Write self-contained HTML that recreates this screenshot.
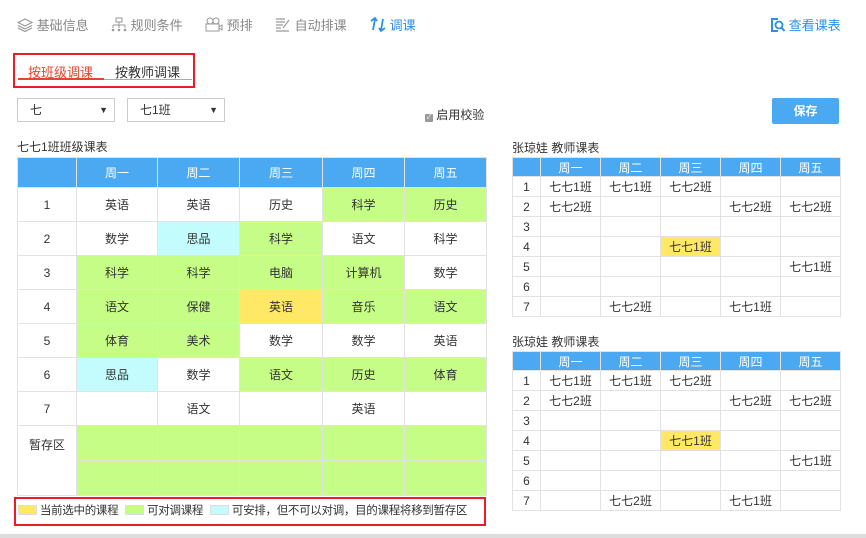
<!DOCTYPE html>
<html><head><style>
body{margin:0;width:866px;height:538px;background:#fff;font-family:"Liberation Sans","Noto Sans CJK SC",sans-serif;font-size:12px;color:#333;position:relative;overflow:hidden}
.a{position:absolute}
.nav{top:15px;font-size:13px;color:#888;}
table{border-collapse:collapse;position:absolute;table-layout:fixed;font-size:12px}
td{border:1px solid #e2e2e2;text-align:center;padding:0}
.ct th,.tt th{background:#4aa9f1;color:#fff;font-weight:normal;border:1px solid #e2e2e2;padding:0;font-size:12px}
.ct td{height:33px}
.ct th{height:29px}
.tt th{height:18px}
.tt td{height:19px}
.g{background:#c6fd86}.c{background:#c2fcfd}.y{background:#ffe866}
.sel{border:1px solid #ccc;height:24px;top:98px;font-size:12px;line-height:22px;box-sizing:border-box}
</style></head><body>
<div class="a nav" style="left:17px"><svg width="16" height="14" viewBox="0 0 16 14" style="vertical-align:-2px"><path d="M8 1L15 4.5 8 8 1 4.5Z M1 7.5L8 11 15 7.5 M1 10L8 13.5 15 10" fill="none" stroke="#999" stroke-width="1.2"/></svg> 基础信息</div>
<div class="a nav" style="left:111px"><svg width="16" height="15" viewBox="0 0 16 15" style="vertical-align:-2px"><rect x="5" y="1" width="6" height="4" fill="none" stroke="#999"/><path d="M8 5V8M2 8H14M2 8V11M8 8V11M14 8V11" stroke="#999" fill="none"/><circle cx="2" cy="13" r="1.3" fill="#999"/><circle cx="8" cy="13" r="1.3" fill="#999"/><circle cx="14" cy="13" r="1.3" fill="#999"/></svg> 规则条件</div>
<div class="a nav" style="left:205px"><svg width="18" height="15" viewBox="0 0 18 15" style="vertical-align:-2px"><circle cx="5" cy="4" r="3" fill="none" stroke="#999"/><circle cx="11" cy="4" r="3" fill="none" stroke="#999"/><rect x="1" y="7" width="13" height="7" fill="none" stroke="#999"/><path d="M14 10L17 8V13L14 11" fill="none" stroke="#999"/></svg> 预排</div>
<div class="a nav" style="left:275px"><svg width="16" height="15" viewBox="0 0 16 15" style="vertical-align:-2px"><path d="M1 2H10M1 5H10M1 8H8M1 11H6M1 14H14M8 11L14 3" stroke="#999" fill="none" stroke-width="1.2"/></svg> 自动排课</div>
<div class="a nav" style="left:370px;color:#2e8fe8"><svg width="16" height="15" viewBox="0 0 16 15" style="vertical-align:-2px"><path d="M3 13L5 2M1 4L5 1 7 4M13 2L11 13M15 11L11 14 9 11" fill="none" stroke="#2e8fe8" stroke-width="1.8"/></svg> 调课</div>
<div class="a nav" style="left:770px;color:#2e8fe8"><svg width="15" height="16" viewBox="0 0 15 16" style="vertical-align:-3px"><path d="M1 1H8V3H3V13H8V15H1Z" fill="#2e8fe8"/><circle cx="9" cy="8" r="3.5" fill="none" stroke="#2e8fe8" stroke-width="1.8"/><path d="M11.5 10.5L14.5 14" stroke="#2e8fe8" stroke-width="2"/></svg> 查看课表</div>

<div class="a" style="left:13px;top:53px;width:178px;height:31px;border:2px solid #ee1c25"></div>
<div class="a" style="left:28px;top:62px;font-size:13px;color:#e8452a">按班级调课</div>
<div class="a" style="left:18px;top:78px;width:86px;height:2px;background:#e8452a"></div>
<div class="a" style="left:104px;top:79px;width:88px;height:1px;background:#aaa"></div>
<div class="a" style="left:115px;top:62px;font-size:13px;color:#333">按教师调课</div>

<div class="a sel" style="left:17px;width:98px;padding-left:12px">七<span style="position:absolute;right:6px;font-size:9px">▼</span></div>
<div class="a sel" style="left:127px;width:98px;padding-left:12px">七1班<span style="position:absolute;right:6px;font-size:9px">▼</span></div>
<div class="a" style="left:425px;top:106px"><span style="display:inline-block;width:8px;height:8px;background:#999;border-radius:1px;vertical-align:0px;color:#fff;font-size:7px;line-height:8px;text-align:center">✓</span> 启用校验</div>
<div class="a" style="left:772px;top:98px;width:67px;height:26px;background:#4aa9f1;color:#fff;border-radius:2px;text-align:center;line-height:26px;font-weight:bold">保存</div>

<div class="a" style="left:17px;top:138px">七七1班班级课表</div>
<table class="ct" style="left:17px;top:157px;width:470px">
<col style="width:59px"><col style="width:81px"><col style="width:82px"><col style="width:83px"><col style="width:82px"><col style="width:82px">
<tr><th></th><th>周一</th><th>周二</th><th>周三</th><th>周四</th><th>周五</th></tr>
<tr><td>1</td><td>英语</td><td>英语</td><td>历史</td><td class="g">科学</td><td class="g">历史</td></tr>
<tr><td>2</td><td>数学</td><td class="c">思品</td><td class="g">科学</td><td>语文</td><td>科学</td></tr>
<tr><td>3</td><td class="g">科学</td><td class="g">科学</td><td class="g">电脑</td><td class="g">计算机</td><td>数学</td></tr>
<tr><td>4</td><td class="g">语文</td><td class="g">保健</td><td class="y">英语</td><td class="g">音乐</td><td class="g">语文</td></tr>
<tr><td>5</td><td class="g">体育</td><td class="g">美术</td><td>数学</td><td>数学</td><td>英语</td></tr>
<tr><td>6</td><td class="c">思品</td><td>数学</td><td class="g">语文</td><td class="g">历史</td><td class="g">体育</td></tr>
<tr><td>7</td><td></td><td>语文</td><td></td><td>英语</td><td></td></tr>
<tr><td rowspan="2" style="vertical-align:top;padding-top:10px;height:59px">暂存区</td><td class="g" style="height:34px"></td><td class="g"></td><td class="g"></td><td class="g"></td><td class="g"></td></tr>
<tr><td class="g" style="height:34px"></td><td class="g"></td><td class="g"></td><td class="g"></td><td class="g"></td></tr>
</table>

<div class="a" style="left:14px;top:497px;width:468px;height:25px;border:2px solid #ee1c25;font-size:11.5px;line-height:25px;white-space:nowrap;overflow:hidden;letter-spacing:-0.3px">
<span style="display:inline-block;width:17px;height:8px;background:#ffe866;border:1px solid #ddd;margin-left:2px;vertical-align:-1px"></span> 当前选中的课程
<span style="display:inline-block;width:17px;height:8px;background:#c6fd86;border:1px solid #ddd;margin-left:4px;vertical-align:-1px"></span> 可对调课程
<span style="display:inline-block;width:17px;height:8px;background:#c2fcfd;border:1px solid #ddd;margin-left:4px;vertical-align:-1px"></span> 可安排，但不可以对调，目的课程将移到暂存区</div>
<div class="a" style="left:0;top:534px;width:866px;height:4px;background:#ddd"></div>

<div class="a" style="left:512px;top:139px">张琼娃 教师课表</div>
<table class="tt" style="left:512px;top:157px;width:328px">
<col style="width:28px"><col style="width:60px"><col style="width:60px"><col style="width:60px"><col style="width:60px"><col style="width:60px">
<tr><th></th><th>周一</th><th>周二</th><th>周三</th><th>周四</th><th>周五</th></tr>
<tr><td>1</td><td>七七1班</td><td>七七1班</td><td>七七2班</td><td></td><td></td></tr>
<tr><td>2</td><td>七七2班</td><td></td><td></td><td>七七2班</td><td>七七2班</td></tr>
<tr><td>3</td><td></td><td></td><td></td><td></td><td></td></tr>
<tr><td>4</td><td></td><td></td><td class="y">七七1班</td><td></td><td></td></tr>
<tr><td>5</td><td></td><td></td><td></td><td></td><td>七七1班</td></tr>
<tr><td>6</td><td></td><td></td><td></td><td></td><td></td></tr>
<tr><td>7</td><td></td><td>七七2班</td><td></td><td>七七1班</td><td></td></tr>
</table>
<div class="a" style="left:512px;top:333px">张琼娃 教师课表</div>
<table class="tt" style="left:512px;top:351px;width:328px">
<col style="width:28px"><col style="width:60px"><col style="width:60px"><col style="width:60px"><col style="width:60px"><col style="width:60px">
<tr><th></th><th>周一</th><th>周二</th><th>周三</th><th>周四</th><th>周五</th></tr>
<tr><td>1</td><td>七七1班</td><td>七七1班</td><td>七七2班</td><td></td><td></td></tr>
<tr><td>2</td><td>七七2班</td><td></td><td></td><td>七七2班</td><td>七七2班</td></tr>
<tr><td>3</td><td></td><td></td><td></td><td></td><td></td></tr>
<tr><td>4</td><td></td><td></td><td class="y">七七1班</td><td></td><td></td></tr>
<tr><td>5</td><td></td><td></td><td></td><td></td><td>七七1班</td></tr>
<tr><td>6</td><td></td><td></td><td></td><td></td><td></td></tr>
<tr><td>7</td><td></td><td>七七2班</td><td></td><td>七七1班</td><td></td></tr>
</table>
</body></html>
